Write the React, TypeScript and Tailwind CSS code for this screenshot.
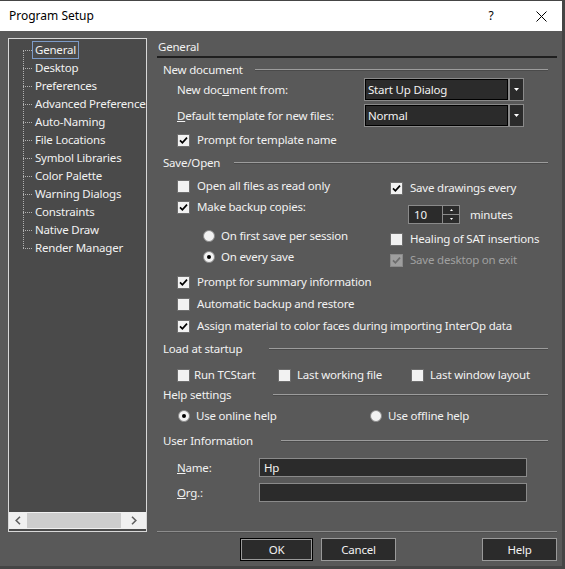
import React from "react";

const font = "font-['Segoe_UI','Noto_Sans',sans-serif]";

function Check({ checked, disabled }: { checked?: boolean; disabled?: boolean }) {
  return (
    <span
      className={`w-[13px] h-[13px] border shrink-0 flex items-center justify-center ${
        disabled ? "bg-[#9e9e9e] border-[#8a8a8a]" : "bg-[#f2f2f2] border-[#6e6e6e]"
      }`}
    >
      {checked && (
        <svg width="9" height="9" viewBox="0 0 9 9">
          <path
            d="M1 4.3 L3.4 6.8 L8 1.6"
            fill="none"
            stroke={disabled ? "#6c6c6c" : "#000"}
            strokeWidth="1.7"
          />
        </svg>
      )}
    </span>
  );
}

function Radio({ on }: { on?: boolean }) {
  return (
    <span className="w-[12px] h-[12px] rounded-full bg-[#f2f2f2] border border-[#8a8a8a] shrink-0 flex items-center justify-center">
      {on && <span className="w-[4px] h-[4px] rounded-full bg-black" />}
    </span>
  );
}

function Section({ label, w, mt }: { label: string; w: string; mt: string }) {
  return (
    <div className={`flex items-center h-[16px] pl-[6px] pr-[9px] ${mt}`}>
      <span className={`${w} shrink-0`}>{label}</span>
      <span className="flex-1 h-[2px] border-t border-[#9c9c9c] border-b border-b-[#4a4a4a]" />
    </div>
  );
}

function CheckRow({
  label,
  checked,
  disabled,
  mt,
}: {
  label: string;
  checked?: boolean;
  disabled?: boolean;
  mt: string;
}) {
  return (
    <div className={`flex items-center gap-[7px] h-[16px] ${mt}`}>
      <Check checked={checked} disabled={disabled} />
      <span className={disabled ? "text-[#a0a0a0]" : ""}>{label}</span>
    </div>
  );
}

function Combo({ value, mt }: { value: string; mt: string }) {
  return (
    <div className={`flex h-[23px] ${mt}`}>
      <div className="w-[145px] border border-[#8a8a8a] bg-[#2b2b2b] flex items-center">
        <div className="w-full h-full border border-black flex items-center pl-[2px]">{value}</div>
      </div>
      <div className="w-[15px] border border-[#8a8a8a] bg-[#2b2b2b] flex items-center justify-center">
        <svg width="5" height="3" viewBox="0 0 5 3">
          <path d="M0 0 H5 L2.5 3 Z" fill="#fff" />
        </svg>
      </div>
    </div>
  );
}

const treeItems = [
  "General",
  "Desktop",
  "Preferences",
  "Advanced Preferences",
  "Auto-Naming",
  "File Locations",
  "Symbol Libraries",
  "Color Palette",
  "Warning Dialogs",
  "Constraints",
  "Native Draw",
  "Render Manager",
];

function Tree() {
  return (
    <div className="w-[139px] h-[494px] border border-[#d8d8d8] bg-[#4a4a4a] flex flex-col shrink-0">
      <div className="flex-1 overflow-hidden pt-[2px] pl-[14px] relative">
        <span className="absolute left-[14px] top-[11px] h-[198px] border-l border-dotted border-[#b0b0b0]" />
        {treeItems.map((t, i) => (
          <div key={t} className="flex items-center h-[18px] whitespace-nowrap">
            <span className="w-[9px] border-t border-dotted border-[#b0b0b0] shrink-0" />
            <span
              className={`border px-[2px] leading-[16px] ${
                i === 0 ? "border-[#7d9bc8]" : "border-transparent"
              }`}
            >
              {t}
            </span>
          </div>
        ))}
      </div>
      <div className="h-[17px] bg-[#f0f0f0] flex items-center mb-[2px]">
        <div className="w-[18px] flex items-center justify-center">
          <svg width="6" height="9" viewBox="0 0 6 9">
            <path d="M5 0.8 L1.2 4.5 L5 8.2" fill="none" stroke="#606060" strokeWidth="1.6" />
          </svg>
        </div>
        <div className="w-[94px] h-[15px] bg-[#cdcdcd]" />
        <div className="flex-1 flex items-center justify-center">
          <svg width="6" height="9" viewBox="0 0 6 9">
            <path d="M1 0.8 L4.8 4.5 L1 8.2" fill="none" stroke="#606060" strokeWidth="1.6" />
          </svg>
        </div>
      </div>
    </div>
  );
}

function Button({ label, primary }: { label: string; primary?: boolean }) {
  return (
    <div
      className={`h-[23px] border ${
        primary ? "w-[73px] border-black" : "w-[75px] border-[#9a9a9a]"
      } bg-[#2b2b2b] flex`}
    >
      <div
        className={`flex-1 flex items-center justify-center ${
          primary ? "border border-[#9a9a9a]" : ""
        }`}
      >
        {label}
      </div>
    </div>
  );
}

export default function App() {
  return (
    <div
      className={`w-[565px] h-[569px] bg-[#454545] pt-[1px] ${font} text-[11.5px] tracking-[-0.2px] text-[#f2f2f2]`}
    >
      <div className="w-[562px] h-[565px] flex flex-col bg-[#595959]">
        {/* title bar */}
        <div className="h-[30px] bg-white text-black flex items-center shrink-0">
          <span className="pl-[9px] flex-1 text-[12px] tracking-normal">Program Setup</span>
          <span className="w-[20px] text-center mr-[34px] text-[12px]">?</span>
          <span className="w-[12px] mr-[15px] flex items-center justify-center">
            <svg width="11" height="11" viewBox="0 0 11 11">
              <path d="M0.5 0.5 L10.5 10.5 M10.5 0.5 L0.5 10.5" stroke="#000" strokeWidth="1" />
            </svg>
          </span>
        </div>

        <div className="flex pt-[7px] pl-[8px]">
          <Tree />

          <div className="ml-[10px] w-[400px] flex flex-col">
            <div className="h-[17px] flex items-center pl-[1px]">General</div>
            <div className="mt-[1px] h-[2px] bg-[#1f1f1f]" />

            <Section label="New document" w="w-[92px]" mt="mt-[4px]" />
            <div className="flex pl-[20px]">
              <div className="w-[187px] flex flex-col">
                <div className="h-[23px] flex items-center">
                  New doc<span className="underline">u</span>ment from:
                </div>
                <div className="h-[23px] mt-[3px] flex items-center">
                  <span className="underline">D</span>efault template for new files:
                </div>
              </div>
              <div className="flex flex-col">
                <Combo value="Start Up Dialog" mt="mt-0" />
                <Combo value="Normal" mt="mt-[3px]" />
              </div>
            </div>
            <div className="pl-[20px]">
              <CheckRow label="Prompt for template name" checked mt="mt-[5px]" />
            </div>

            <Section label="Save/Open" w="w-[71px]" mt="mt-[7px]" />
            <div className="flex pl-[20px]">
              <div className="w-[213px] flex flex-col">
                <CheckRow label="Open all files as read only" mt="mt-[7px]" />
                <CheckRow label="Make backup copies:" checked mt="mt-[5px]" />
                <div className="flex items-center gap-[6px] h-[16px] mt-[13px] pl-[26px]">
                  <Radio />
                  <span>On first save per session</span>
                </div>
                <div className="flex items-center gap-[6px] h-[16px] mt-[5px] pl-[26px]">
                  <Radio on />
                  <span>On every save</span>
                </div>
              </div>
              <div className="flex flex-col">
                <CheckRow label="Save drawings every" checked mt="mt-[9px]" />
                <div className="flex items-center h-[19px] mt-[9px] pl-[18px]">
                  <div className="w-[35px] h-full border border-[#8a8a8a] bg-[#2b2b2b] flex items-center pl-[5px]">
                    10
                  </div>
                  <div className="w-[17px] h-full border border-[#8a8a8a] border-l-0 bg-[#2b2b2b] flex flex-col">
                    <div className="flex-1 flex items-center justify-center border-b border-[#8a8a8a]">
                      <svg width="3" height="2" viewBox="0 0 3 2">
                        <path d="M0 2 H3 L1.5 0 Z" fill="#fff" />
                      </svg>
                    </div>
                    <div className="flex-1 flex items-center justify-center">
                      <svg width="3" height="2" viewBox="0 0 3 2">
                        <path d="M0 0 H3 L1.5 2 Z" fill="#fff" />
                      </svg>
                    </div>
                  </div>
                  <span className="ml-[10px]">minutes</span>
                </div>
                <CheckRow label="Healing of SAT insertions" mt="mt-[7px]" />
                <CheckRow label="Save desktop on exit" checked disabled mt="mt-[5px]" />
              </div>
            </div>
            <div className="pl-[20px] flex flex-col">
              <CheckRow label="Prompt for summary information" checked mt="mt-[6px]" />
              <CheckRow label="Automatic backup and restore" mt="mt-[6px]" />
              <CheckRow label="Assign material to color faces during importing InterOp data" checked mt="mt-[6px]" />
            </div>

            <Section label="Load at startup" w="w-[106px]" mt="mt-[7px]" />
            <div className="flex items-center h-[16px] mt-[10px] pl-[20px]">
              <div className="w-[101px] flex items-center gap-[4px]">
                <Check />
                <span>Run TCStart</span>
              </div>
              <div className="w-[133px] flex items-center gap-[6px]">
                <Check />
                <span>Last working file</span>
              </div>
              <div className="flex items-center gap-[6px]">
                <Check />
                <span>Last window layout</span>
              </div>
            </div>

            <Section label="Help settings" w="w-[110px]" mt="mt-[4px]" />
            <div className="flex items-center h-[16px] mt-[5px] pl-[21px]">
              <div className="w-[192px] flex items-center gap-[6px]">
                <Radio on />
                <span>Use online help</span>
              </div>
              <div className="flex items-center gap-[6px]">
                <Radio />
                <span>Use offline help</span>
              </div>
            </div>

            <Section label="User Information" w="w-[118px]" mt="mt-[9px]" />
            <div className="flex items-center h-[19px] mt-[9px] pl-[20px]">
              <span className="w-[82px]">
                <span className="underline">N</span>ame:
              </span>
              <div className="w-[268px] h-full border border-[#8a8a8a] bg-[#2b2b2b] flex items-center pl-[4px]">
                Hp
              </div>
            </div>
            <div className="flex items-center h-[19px] mt-[6px] pl-[20px]">
              <span className="w-[82px]">
                <span className="underline">O</span>rg.:
              </span>
              <div className="w-[268px] h-full border border-[#8a8a8a] bg-[#2b2b2b]" />
            </div>

            <div className="mt-[29px] h-[2px] border-t border-[#8c8c8c] border-b border-b-[#505050]" />
            <div className="flex items-center mt-[5px] pl-[83px]">
              <Button label="OK" primary />
              <div className="ml-[8px]">
                <Button label="Cancel" />
              </div>
              <div className="ml-auto">
                <Button label="Help" />
              </div>
            </div>
          </div>
        </div>
      </div>
    </div>
  );
}
